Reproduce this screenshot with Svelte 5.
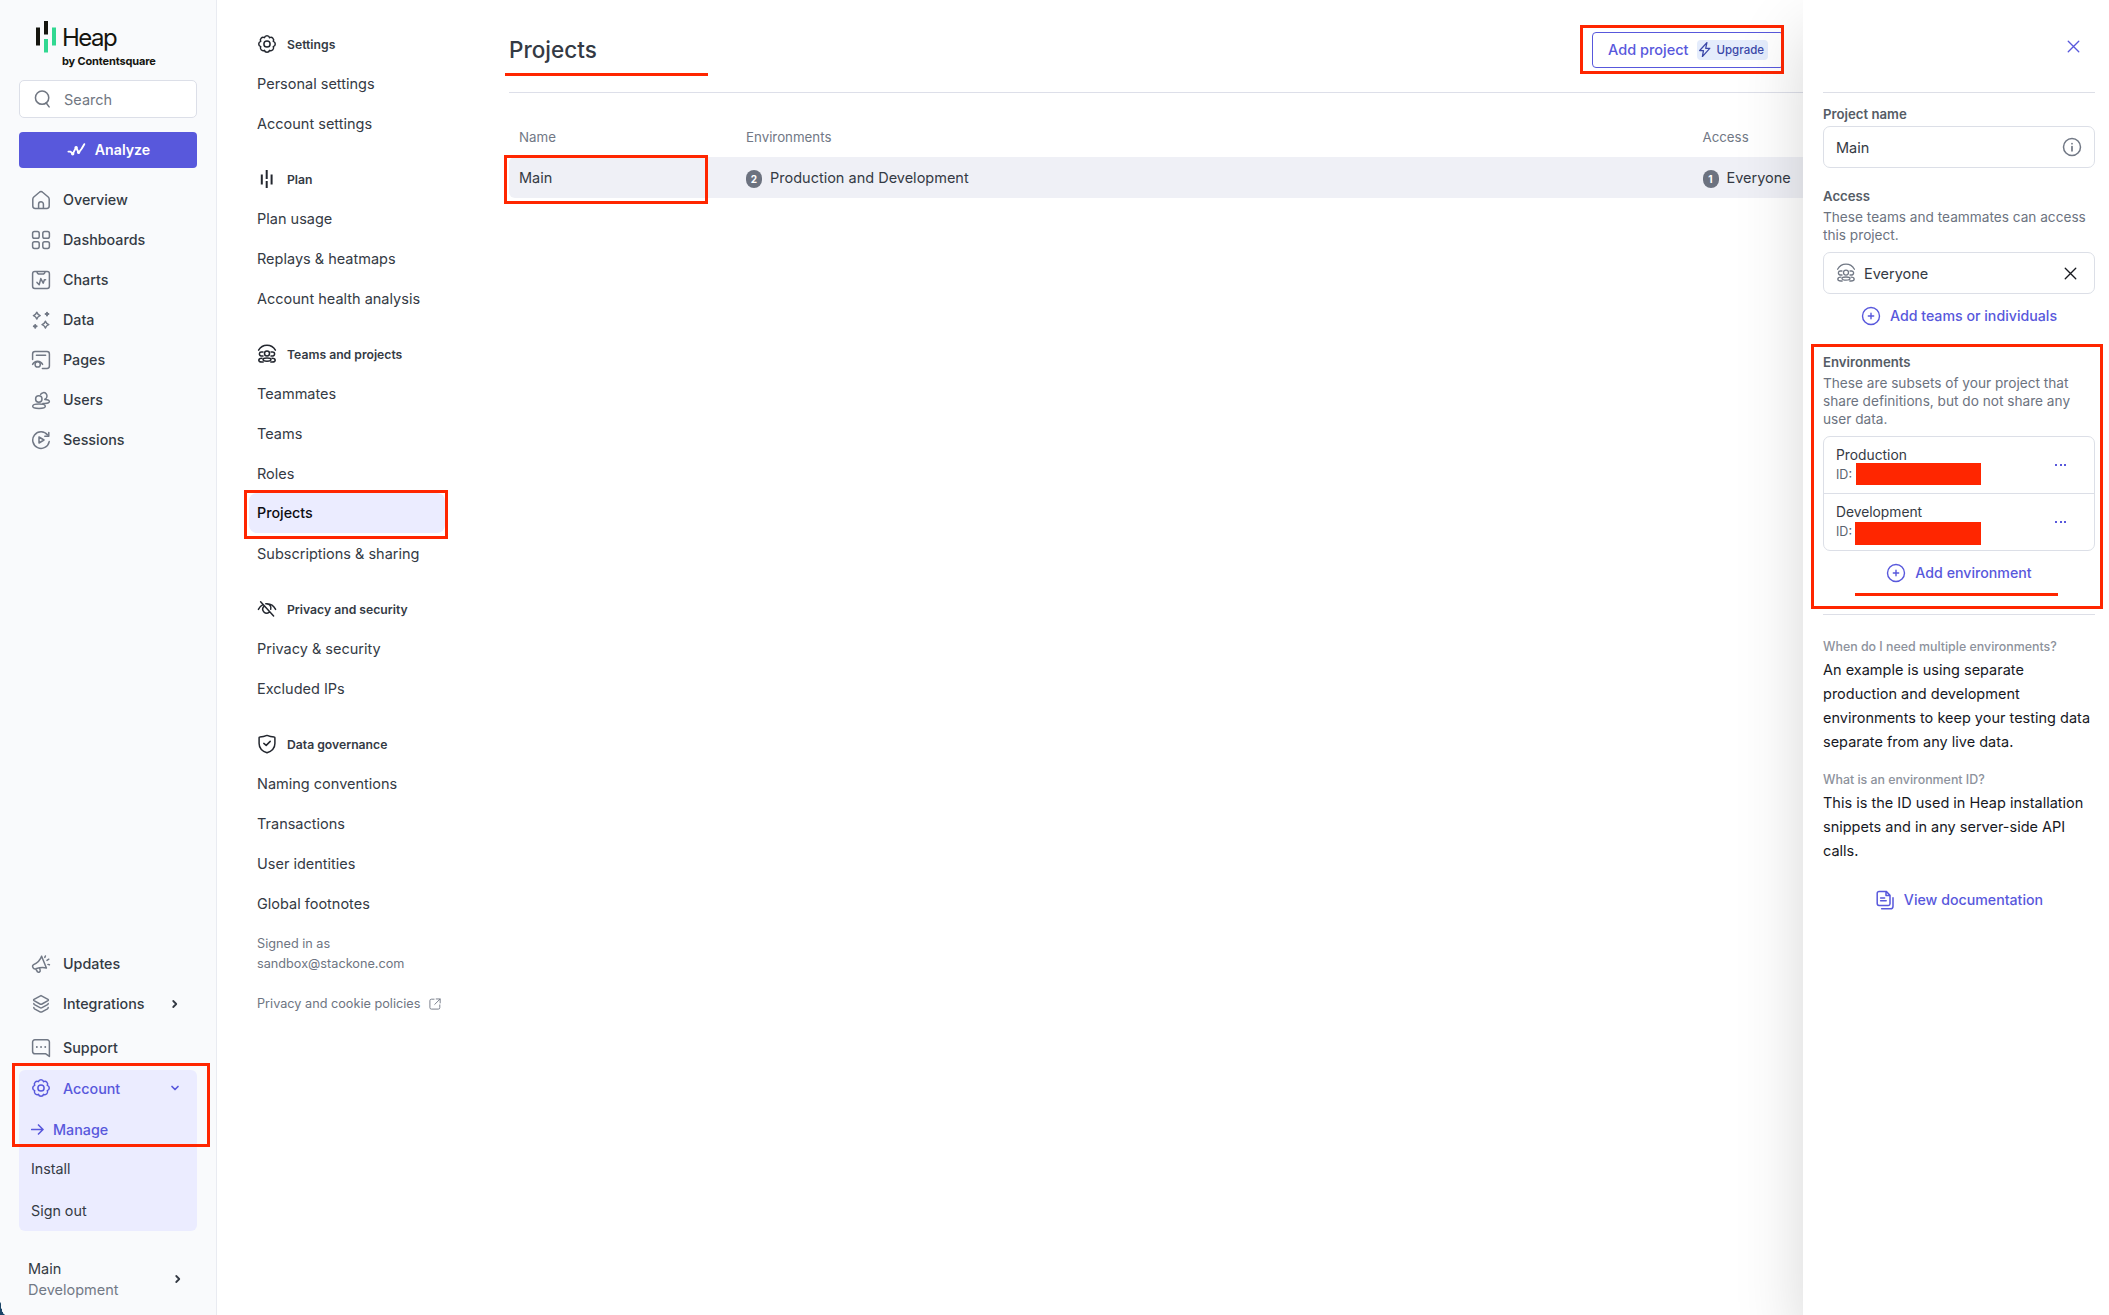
<script>
  // 8-lobed gear outline around a 20x20 box
  function gearPath(r = 6.8, lobe = 2.7) {
    const pts = Array.from({ length: 8 }, (_, i) => {
      const a = ((i + 0.5) * Math.PI) / 4;
      return [(10 + r * Math.cos(a)).toFixed(2), (10 + r * Math.sin(a)).toFixed(2)];
    });
    const arcs = pts.slice(1).concat([pts[0]]).map(([x, y]) => `A${lobe} ${lobe} 0 0 1 ${x} ${y}`);
    return `M${pts[0][0]} ${pts[0][1]}${arcs.join('')}Z`;
  }

  const ICONS = {
    search: '<circle cx="9" cy="8.5" r="7.4"/><path d="M13.6 14.4 16.8 18.8"/>',
    analyze: '<path d="M1.5 12.2h2.2L6 14.6l3.6-6.8 2.6 5.6 3.2-4.2 2.8-4.8"/><circle cx="6" cy="14.4" r=".8"/><circle cx="9.6" cy="8" r=".8"/><circle cx="12.2" cy="13" r=".8"/>',
    home: '<path d="M1.8 9.2V16a2.4 2.4 0 0 0 2.4 2.4h11.6a2.4 2.4 0 0 0 2.4-2.4V9.2c0-.9-.4-1.6-1-2.2L11.6 2.3a2.2 2.2 0 0 0-3.2 0L2.8 7c-.6.6-1 1.3-1 2.2Z"/><path d="M7.6 18.2v-4a2.4 2.4 0 0 1 4.8 0v4"/>',
    grid: '<rect x="1.6" y="1.6" width="6.6" height="6.6" rx="1.8"/><rect x="11.8" y="1.6" width="6.6" height="6.6" rx="1.8"/><rect x="1.6" y="11.8" width="6.6" height="6.6" rx="1.8"/><rect x="11.8" y="11.8" width="6.6" height="6.6" rx="1.8"/>',
    chart: '<rect x="1.6" y="1.6" width="16.8" height="16.8" rx="2.2"/><path d="M6 1.8c.3 1.6 1 2.2 2.2 2.2h3.6c1.2 0 1.9-.6 2.2-2.2"/><path d="M6 12.4 8.2 14.8l1.6-6.2 2.4 4.6 1.2-3.4h1.2"/>',
    data: '<path d="M5.8 2.2C6.5 4.2 7.2 4.9 9.2 5.6 7.2 6.3 6.5 7 5.8 9 5.1 7 4.4 6.3 2.4 5.6 4.4 4.9 5.1 4.2 5.8 2.2ZM14.4 11.2c.7 2 1.4 2.7 3.4 3.4-2 .7-2.7 1.4-3.4 3.4-.7-2-1.4-2.7-3.4-3.4 2-.7 2.7-1.4 3.4-3.4Z"/><path d="M16 2.7v2.8M14.6 4.1h2.8M4.2 14.9v2.8M2.8 16.3h2.8" stroke-width="2"/>',
    pages: '<path d="M1.6 9.6V4a2.4 2.4 0 0 1 2.4-2.4h12A2.4 2.4 0 0 1 18.4 4v12a2.4 2.4 0 0 1-2.4 2.4h-4.6"/><path d="M5.4 5.2h9.2M1.6 14.4c1-2 2.8-3.2 5-3.2s4 1.2 5 3.2"/><circle cx="6.7" cy="14.4" r="2.6"/>',
    users: '<circle cx="7.8" cy="9" r="3.2"/><ellipse cx="8" cy="16.2" rx="6.3" ry="2.2"/><path d="M9.6 4.4a3.4 3.4 0 1 1 4.2 4.8M13.8 9.6c2.8.2 4.6 1 4.6 2s-1.8 1.8-4.6 1.8h-2"/>',
    session: '<path d="M16.6 5A8.3 8.3 0 1 0 18.2 11.6"/><path d="M17.8 2.6v3.6h-4M8 7v6l5-3Z"/>',
    updates: '<path d="M10.6 2.2 15.4 14M10.6 2.2C9 7 6 9 2.6 10.6c-1.2.7-1.2 1.9-.6 3 .6 1.2 1.6 1.6 2.8 1.2C8 13.6 11.6 12.8 15.4 14M4.8 15l1.8 3c1 .8 3-.2 2.6-1.6L8.6 14M13.8 3.4l.6-1.4M16 6.4l1.8-1.2M17 10.4l1.4.4"/>',
    layers: '<path d="m10 1.6 7 3.8c.5.3.5.9 0 1.2l-6 3.4q-1 .6-2 0L3 6.6c-.5-.3-.5-.9 0-1.2Z"/><path d="M2.8 9.4c0 .6.2.9.7 1.2l5.500 3q1 .6 2 0l5.500-3c.5-.3.7-.6.7-1.2M2.8 13.6c0 .6.2.9.7 1.2l5.500 3q1 .6 2 0l5.500-3c.5-.3.7-.6.7-1.2"/>',
    support: '<path d="M3.8 1.8h12.4a2.2 2.2 0 0 1 2.2 2.2v14.4L14.8 15.8h-11a2.2 2.2 0 0 1-2.2-2.2V4a2.2 2.2 0 0 1 2.2-2.2Z"/><path d="M5.8 9h.1M10 9h.1M14.2 9h.1" stroke-width="1.8"/>',
    gear: `<path d="${gearPath()}"/><circle cx="10" cy="10" r="3.1"/>`,
    plan: '<path d="M4.8 5.4v10M14.6 5.4v10M9.7 1v9M9.7 12v7" stroke-width="2" stroke-linecap="butt"/>',
    team: '<path d="M1.6 6.2C3.4 3 6.4 1.2 10 1.2S16.6 3 18.4 6.2"/><circle cx="10" cy="9.6" r="2.5"/><path d="M6 8H4.6a2 2 0 0 0-.4 4H6M14 8h1.4a2 2 0 0 1 .4 4H14"/><ellipse cx="10" cy="15.6" rx="4" ry="1.6"/><path d="M5 14.2c-1.8 0-3.2.7-3.2 2s1.2 1.800 3.2 1.800h1.2M15 14.2c1.8 0 3.2.7 3.2 2s-1.2 1.800-3.2 1.800h-1.2"/>',
    eyeoff: '<path d="M3.6 2.8 16.6 17M1.4 10.4C2.4 8.2 4 6.6 6 5.6M8.8 4.8c4.2-.4 7.8 1.6 9.8 5.6M6.8 7.6a3.9 3.9 0 0 0 5.4 5.6M10 5a3.9 3.9 0 0 1 3.7 5.2"/>',
    shield: '<path d="M10 1.4c2.4 1 4.8 1.5 7.2 1.6.4 0 .7.4.7.8v5.6c0 4.4-3 7.6-7.9 9.4-4.9-1.8-7.9-5-7.9-9.4V3.8c0-.4.3-.8.7-.8C5.2 2.9 7.6 2.4 10 1.4Z"/><path d="m6.8 9.4 2.4 2 4-4"/>',
    external: '<path d="M8.500 2H4a2.500 2.500 0 0 0-2.500 2.500V16A2.500 2.500 0 0 0 4 18.500h11.500A2.500 2.500 0 0 0 18 16v-4.500M12 1.600h6.600v6.600M18.400 1.800 9.600 10.600"/>',
    bolt: '<path d="M13.2 .8 3.600 11.400h5L7.200 19.400 17 8.400h-5.400Z"/>',
    info: '<circle cx="10" cy="10" r="8.500"/><path d="M10 9.600v4.200M10 6.600v.1" stroke-width="1.7"/>',
    plus: '<circle cx="10" cy="10" r="8.500"/><path d="M10 7.300v5.400M7.300 10h5.400"/>',
    docs: '<path d="M4 1.400h7.200L15 5.200v8.600a1.600 1.600 0 0 1-1.600 1.600H4a1.800 1.800 0 0 1-1.800-1.800V3.200A1.800 1.800 0 0 1 4 1.400ZM11 1.600v3.800h3.800M5.600 8h4M5.600 10.800h5.600"/><path d="M18 7.800v8.400a2.600 2.600 0 0 1-2.600 2.600H6.600"/>',
    close: '<path d="m3 3 14 14M17 3 3 17"/>',
    arrow: '<path d="M1 10h17M11.500 3l7 7-7 7"/>',
    right: '<path d="m6.500 4 6 6-6 6"/>',
    down: '<path d="m4 7 6 6 6-6"/>'
  };

  const mainNav = [
    { icon: 'home', label: 'Overview' },
    { icon: 'grid', label: 'Dashboards' },
    { icon: 'chart', label: 'Charts' },
    { icon: 'data', label: 'Data' },
    { icon: 'pages', label: 'Pages' },
    { icon: 'users', label: 'Users' },
    { icon: 'session', label: 'Sessions' }
  ];

  const sections = [
    { icon: 'gear', title: 'Settings', items: ['Personal settings', 'Account settings'] },
    { icon: 'plan', title: 'Plan', items: ['Plan usage', 'Replays & heatmaps', 'Account health analysis'] },
    { icon: 'team', title: 'Teams and projects', items: ['Teammates', 'Teams', 'Roles', 'Projects', 'Subscriptions & sharing'] },
    { icon: 'eyeoff', title: 'Privacy and security', items: ['Privacy & security', 'Excluded IPs'] },
    { icon: 'shield', title: 'Data governance', items: ['Naming conventions', 'Transactions', 'User identities', 'Global footnotes'] }
  ];

  const environments = ['Production', 'Development'];
  let active = $state('Projects');
</script>

{#snippet icon(name, size = 20, width = 1.5)}
  <svg class="icon" width={size} height={size} viewBox="0 0 20 20" fill="none" stroke="currentColor" stroke-width={width} stroke-linecap="round" stroke-linejoin="round">
    {@html ICONS[name]}
  </svg>
{/snippet}

<div class="app">
  <aside class="sidebar">
    <div class="logo">
      <svg width="22" height="32" viewBox="0 0 22 32">
        <path d="M0 6.500h4v18H0zM8 0h4v13.500H8z" fill="#15150f" />
        <path d="M8 18h4v13.500H8zM16 6.500h4v18h-4z" fill="#31d891" />
      </svg>
      <div class="logo-text">
        <span class="heap">Heap</span>
        <span class="by">by Contentsquare</span>
      </div>
    </div>
    <div class="search">{@render icon('search', 18, 1.7)}<span>Search</span></div>
    <button class="analyze">{@render icon('analyze', 19, 2)}<span>Analyze</span></button>
    <nav class="nav">
      {#each mainNav as item}
        <div class="nav-item">{@render icon(item.icon)}<span>{item.label}</span></div>
      {/each}
    </nav>

    <div class="bottom">
      <div class="nav-item">{@render icon('updates')}<span>Updates</span></div>
      <div class="nav-item integrations">
        {@render icon('layers')}<span>Integrations</span>
        <i class="chev">{@render icon('right', 10, 3.6)}</i>
      </div>
      <div class="nav-item">{@render icon('support')}<span>Support</span></div>
      <div class="account">
        <div class="nav-item accent">
          {@render icon('gear')}<span>Account</span>
          <i class="chev">{@render icon('down', 10, 3.4)}</i>
        </div>
        <div class="sub accent manage">{@render icon('arrow', 13, 2.4)}<span>Manage</span></div>
        <div class="sub">Install</div>
        <div class="sub out">Sign out</div>
        <div class="mark mark-account"></div>
      </div>
      <div class="env-switch">
        <div>
          <div>Main</div>
          <div class="dim">Development</div>
        </div>
        {@render icon('right', 10, 3.6)}
      </div>
    </div>
    <div class="corner"></div>
  </aside>

  <nav class="settings">
    {#each sections as section}
      <section>
        <h3>{@render icon(section.icon)}<span>{section.title}</span></h3>
        {#each section.items as item}
          <div class="link" class:active={item === active}>
            <span>{item}</span>
            {#if item === active}<div class="mark mark-link"></div>{/if}
          </div>
        {/each}
      </section>
    {/each}
    <div class="signed">
      <div>Signed in as</div>
      <div>sandbox@stackone.com</div>
      <div class="policies">Privacy and cookie policies {@render icon('external', 12, 1.5)}</div>
    </div>
  </nav>

  <main>
    <header>
      <h1>Projects<i class="underline title-line"></i></h1>
      <button class="add-project">
        <span>Add project</span>
        <span class="pill">{@render icon('bolt', 15, 1.7)}Upgrade</span>
        <i class="mark mark-add"></i>
      </button>
    </header>
    <div class="row head">
      <span>Name</span><span>Environments</span><span>Access</span>
    </div>
    <div class="row body">
      <span>Main</span>
      <span><b class="count">2</b>Production and Development</span>
      <span><b class="count">1</b>Everyone</span>
      <div class="mark mark-row"></div>
    </div>
  </main>

  <aside class="panel">
    <div class="panel-top">{@render icon('close', 15, 1.8)}</div>
    <h4>Project name</h4>
    <div class="field"><span>Main</span><i class="info">{@render icon('info')}</i></div>
    <h4 class="access">Access</h4>
    <p>These teams and teammates can access this project.</p>
    <div class="field everyone">
      <i class="grey">{@render icon('team', 20, 1.3)}</i><span>Everyone</span>
      <i class="remove">{@render icon('close', 15, 1.8)}</i>
    </div>
    <div class="action teams">{@render icon('plus', 20, 1.4)}<span>Add teams or individuals</span></div>

    <div class="environments">
      <h4>Environments</h4>
      <p>These are subsets of your project that share definitions, but do not share any user data.</p>
      <div class="env-list">
        {#each environments as env}
          <div class="env">
            <div>
              <div class="env-name">{env}</div>
              <div class="env-id">ID: <i class="redacted"></i></div>
            </div>
            <span class="dots"><i></i><i></i><i></i></span>
          </div>
        {/each}
      </div>
      <div class="action add-env">{@render icon('plus', 20, 1.4)}<span>Add environment</span><i class="underline env-line"></i></div>
      <div class="mark mark-env"></div>
    </div>

    <div class="help">
      <h5>When do I need multiple environments?</h5>
      <p>An example is using separate production and development environments to keep your testing data separate from any live data.</p>
      <h5>What is an environment ID?</h5>
      <p>This is the ID used in Heap installation snippets and in any server-side API calls.</p>
    </div>
    <div class="action docs">{@render icon('docs', 20, 1.5)}<span>View documentation</span></div>
  </aside>
</div>

<style>
  :global(body) { margin: 0; overflow: hidden; }
  .app { display: flex; height: 1315px; width: 2109px; overflow: hidden; font-family: Inter, 'Liberation Sans', sans-serif; font-size: 14.5px; color: #343a44; background: #fff; }
  .app :global(*) { box-sizing: border-box; }
  i, b { font-style: normal; }
  button { font: inherit; }
  .icon { display: block; flex: none; }

  .mark { position: absolute; border: 3px solid #ff2600; pointer-events: none; }
  .underline { position: absolute; height: 3px; width: 203px; background: #ff2600; }

  /* left sidebar */
  .sidebar { position: relative; flex: none; width: 217px; padding: 21px 19px 0; display: flex; flex-direction: column; background: #f9fafc; border-right: 1px solid #e9ebf1; font-weight: 500; }
  .logo { display: flex; height: 59px; padding-left: 17px; gap: 4px; }
  .logo-text { display: flex; flex-direction: column; color: #15150f; }
  .heap { font-size: 24px; line-height: 33px; letter-spacing: -1.5px; font-weight: 400; }
  .by { font-size: 11px; line-height: 14px; font-weight: 700; letter-spacing: -0.15px; }
  .search { display: flex; align-items: center; gap: 12px; height: 38px; padding-left: 14px; border: 1px solid #dcdfe8; border-radius: 5px; background: #fff; color: #717782; font-weight: 400; }
  .analyze { display: flex; align-items: center; justify-content: center; gap: 9px; height: 36px; margin-top: 14px; padding: 0 0 1px 1px; border: 0; border-radius: 4px; background: #5858dc; color: #fff; font-weight: 600; font-size: 14.2px; }
  .nav { margin-top: 12px; }
  .nav-item { display: flex; align-items: center; gap: 12px; height: 40px; padding: 0 0 1px 12px; font-size: 14.3px; }
  .nav-item > .icon { color: #717885; }
  .chev { margin-left: auto; margin-right: 17px; }
  .bottom { margin-top: auto; height: 371px; }
  .integrations { margin-bottom: 4px; }
  .account { position: relative; margin-top: 2px; height: 161px; border-radius: 6px; background: #ebecff; }
  .accent, .accent > .icon { color: #5858dc; }
  .account .nav-item { height: 37px; }
  .sub { display: flex; align-items: center; gap: 9px; height: 39px; padding-left: 12px; font-size: 14.3px; font-weight: 400; }
  .manage { height: 42px; padding-top: 2px; font-weight: 500; }
  .sub.out { height: 44px; }
  .mark-account { left: -7px; top: -7px; width: 198px; height: 84px; }
  .env-switch { display: flex; justify-content: space-between; align-items: center; margin-top: 27px; padding: 0 14px 0 9px; line-height: 21px; font-weight: 400; }
  .dim { color: #727986; }
  .corner { position: absolute; left: 0; bottom: 0; width: 5px; height: 20px; background: radial-gradient(ellipse 5px 20px at 100% 0, transparent 96%, #1b4468 100%); }

  /* settings menu */
  .settings { flex: none; width: 288px; padding: 24px 60px 0 32px; }
  section { margin-bottom: 16px; }
  h3 { display: flex; align-items: center; gap: 10px; height: 39px; margin: 0; padding: 1px 0 0 8px; font-size: 12.2px; font-weight: 600; }
  h3 .icon { color: #23272f; }
  .link { position: relative; display: flex; align-items: center; height: 40px; padding-left: 8px; border-radius: 8px; }
  .link.active { padding-bottom: 1px; color: #0c0d12; font-weight: 500; font-size: 14.3px; background: #ebecff; }
  .mark-link { left: -5px; top: -3px; width: 204px; height: 49px; }
  .signed { margin-top: -5px; padding-left: 8px; font-size: 12.7px; line-height: 20px; color: #6e7582; }
  .policies { display: flex; align-items: center; gap: 9px; margin-top: 20px; }

  /* project list */
  main { flex: 1; min-width: 0; padding-left: 4px; }
  header { display: flex; align-items: center; justify-content: space-between; height: 93px; padding: 7px 19px 0 0; border-bottom: 1px solid #dddfe9; }
  h1 { position: relative; margin: 0; font-size: 22.500px; font-weight: 500; }
  .title-line { left: -4px; top: 37px; }
  .add-project { position: relative; display: flex; align-items: center; gap: 8px; width: 192px; height: 36px; padding: 0 0 0 15px; border: 1px solid #5858dc; border-radius: 4px; background: #fff; color: #5858dc; font-weight: 500; }
  .pill { display: flex; align-items: center; gap: 5px; height: 20px; width: 71px; padding-left: 0; border-radius: 4px; background: #e4ecfc; color: #3a47a8; font-size: 11.500px; }
  .mark-add { left: -13px; top: -8px; width: 204px; height: 49px; }
  .row { position: relative; display: grid; grid-template-columns: 227px 956.500px 1fr; padding-left: 10px; align-items: center; }
  .row span { display: flex; align-items: center; }
  .head { margin-top: 24px; height: 40px; font-size: 13.3px; color: #717885; }
  .body { height: 41px; border-radius: 6px 0 0 6px; background: #eff0f6; }
  .count { display: grid; place-items: center; width: 16px; height: 18px; margin: 2px 8px 0 0; border-radius: 8px; background: #6c727f; color: #fff; font-size: 10px; font-weight: 700; }
  .mark-row { left: -5px; top: -2px; width: 204px; height: 49px; }

  /* project details */
  .panel { position: relative; flex: none; width: 306px; padding: 0 14px 0 20px; background: #fff; box-shadow: 0 32px 64px rgba(0, 0, 0, 0.16); }
  .panel-top { display: flex; justify-content: flex-end; align-items: center; height: 93px; padding-right: 14px; border-bottom: 1px solid #dddfe7; color: #5858dc; }
  h4 { margin: 0; padding-top: 13px; line-height: 17px; font-size: 13.2px; font-weight: 600; color: #555c66; }
  .field { display: flex; align-items: center; height: 42px; padding: 0 12px; border: 1px solid #dcdfe7; border-radius: 7px; }
  h4 + .field { margin-top: 3px; }
  .info, .remove { margin-left: auto; }
  .info, .grey { color: #717885; }
  .remove { margin-right: 4px; color: #17191f; }
  .grey { margin-right: 8px; }
  h4.access { padding-top: 20px; }
  .panel p { margin: 3px 0 0; font-size: 13.65px; line-height: 18px; color: #6c7380; }
  .everyone { margin-top: 8px; }
  .action { position: relative; display: flex; align-items: center; justify-content: center; gap: 9px; padding-bottom: 1px; color: #5858dc; font-size: 14.2px; font-weight: 500; }
  .teams { height: 44px; }
  .environments { position: relative; height: 277px; border-bottom: 1px solid #dddfe7; padding-top: 3px; }
  .env-list { margin-top: 8px; border: 1px solid #dcdfe7; border-radius: 7px; }
  .env { display: flex; justify-content: space-between; height: 56px; padding: 8px 28px 0 12px; }
  .env + .env { height: 57px; border-top: 1px solid #dcdfe7; }
  .env-name { margin-bottom: 1px; font-size: 13.8px; line-height: 20px; }
  .env-id { position: relative; font-size: 12.500px; line-height: 18px; color: #5c636e; }
  .redacted { position: absolute; left: 20px; top: -3px; width: 125px; height: 22px; background: #ff2600; }
  .env + .env .redacted { left: 19px; top: -1px; width: 126px; height: 23px; }
  .dots { display: flex; gap: 2.500px; margin-top: 19px; }
  .dots i { width: 2px; height: 2px; background: #5858dc; }
  .add-env { height: 44px; }
  .env-line { left: 32px; top: 42px; }
  .mark-env { left: -12px; top: 6px; width: 292px; height: 265px; }
  .help { padding-top: 22px; }
  h5 { margin: 0; font-size: 12.4px; line-height: 19px; font-weight: 500; color: #8d929c; }
  .help p { margin: 2px 0 16px; font-size: 14.500px; line-height: 24px; color: #17191f; }
  .help p:last-child { margin-bottom: 0; }
  .docs { margin-top: 26px; height: 22px; }
</style>
